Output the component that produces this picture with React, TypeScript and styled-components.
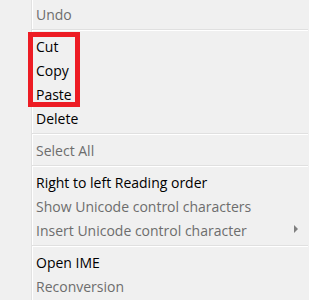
import React from 'react';
import styled, { createGlobalStyle } from 'styled-components';

const GlobalStyle = createGlobalStyle`
  html, body {
    margin: 0;
    padding: 0;
    background: #f0f0f0;
  }
`;

type Entry =
  | { kind: 'item'; label: string; disabled?: boolean; submenu?: boolean }
  | { kind: 'separator' };

const StyledMenu = styled.div`
  display: flex;
  width: 309px;
  height: 300px;
  background: #f0f0f0;
  font-family: 'Open Sans', 'Noto Sans', sans-serif;
  font-size: 14px;
  overflow: hidden;
`;

const Gutter = styled.div`
  width: 31px;
  flex: none;
`;

const ItemList = styled.div`
  display: flex;
  flex-direction: column;
  width: 276px;
  padding-top: 2px;
  border-left: 1px solid #e2e2e2;
  box-shadow: inset 1px 0 #ffffff;
`;

const StyledItem = styled.div<{ $disabled?: boolean }>`
  display: flex;
  align-items: center;
  justify-content: space-between;
  height: 24px;
  padding: 0 10px 0 4px;
  color: ${(props) => (props.$disabled ? '#6d6d6d' : '#000000')};
  white-space: nowrap;
`;

const Separator = styled.div`
  height: 8px;
  display: flex;
  flex-direction: column;
  justify-content: center;

  &::before {
    content: '';
    height: 1px;
    background: #e0e0e0;
  }

  &::after {
    content: '';
    height: 1px;
    background: #ffffff;
  }
`;

const Highlight = styled.div`
  position: relative;
  display: flex;
  flex-direction: column;

  &::after {
    content: '';
    position: absolute;
    top: -2px;
    bottom: -1px;
    left: -4px;
    width: 52px;
    box-sizing: border-box;
    border: 5px solid #ed1c24;
    pointer-events: none;
  }
`;

const Arrow = styled.span`
  width: 0;
  height: 0;
  margin-top: -2px;
  border-top: 4px solid transparent;
  border-bottom: 4px solid transparent;
  border-left: 4px solid #7f7f7f;
`;

const MenuItem: React.FC<{ label: string; disabled?: boolean; submenu?: boolean }> = ({
  label,
  disabled,
  submenu,
}) => (
  <StyledItem $disabled={disabled}>
    <span>{label}</span>
    {submenu && <Arrow />}
  </StyledItem>
);

const after: Entry[] = [
  { kind: 'item', label: 'Delete' },
  { kind: 'separator' },
  { kind: 'item', label: 'Select All', disabled: true },
  { kind: 'separator' },
  { kind: 'item', label: 'Right to left Reading order' },
  { kind: 'item', label: 'Show Unicode control characters', disabled: true },
  { kind: 'item', label: 'Insert Unicode control character', disabled: true, submenu: true },
  { kind: 'separator' },
  { kind: 'item', label: 'Open IME' },
  { kind: 'item', label: 'Reconversion', disabled: true },
];

const App: React.FC = () => {
  return (
    <>
      <GlobalStyle />
      <StyledMenu>
        <Gutter />
        <ItemList>
          <MenuItem label="Undo" disabled />
          <Separator />
          <Highlight>
            <MenuItem label="Cut" />
            <MenuItem label="Copy" />
            <MenuItem label="Paste" />
          </Highlight>
          {after.map((entry, i) =>
            entry.kind === 'separator' ? (
              <Separator key={i} />
            ) : (
              <MenuItem key={i} label={entry.label} disabled={entry.disabled} submenu={entry.submenu} />
            ),
          )}
        </ItemList>
      </StyledMenu>
    </>
  );
};

export default App;
